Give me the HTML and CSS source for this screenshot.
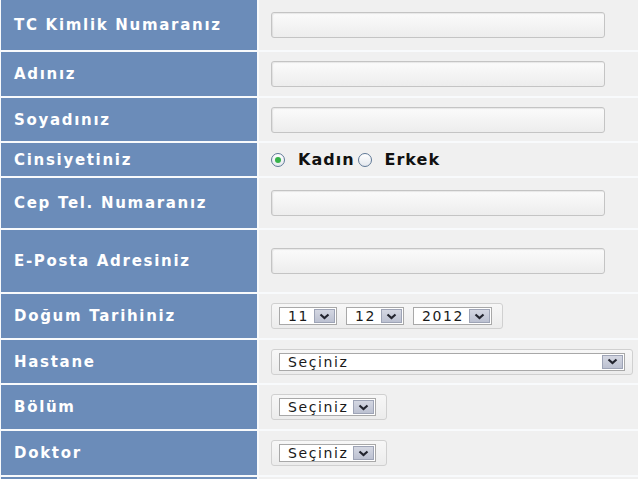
FILE: index.html
```html
<!DOCTYPE html>
<html lang="tr">
<head>
    <meta charset="UTF-8">
    <meta name="viewport" content="width=device-width, initial-scale=1.0">
    <title>Randevu Formu</title>
    <link rel="stylesheet" href="styles.css">
</head>
<body>
    <div class="form">
        <div class="row row-tc">
            <div class="label">TC Kimlik Numaranız</div>
            <div class="field"><input class="text-input" type="text"></div>
        </div>
        <div class="row row-name">
            <div class="label">Adınız</div>
            <div class="field"><input class="text-input" type="text"></div>
        </div>
        <div class="row row-surname">
            <div class="label">Soyadınız</div>
            <div class="field"><input class="text-input" type="text"></div>
        </div>
        <div class="row row-gender">
            <div class="label">Cinsiyetiniz</div>
            <div class="field">
                <label class="radio-option"><span class="radio checked"></span>Kadın</label>
                <label class="radio-option"><span class="radio"></span>Erkek</label>
            </div>
        </div>
        <div class="row row-phone">
            <div class="label">Cep Tel. Numaranız</div>
            <div class="field"><input class="text-input" type="text"></div>
        </div>
        <div class="row row-mail">
            <div class="label">E-Posta Adresiniz</div>
            <div class="field"><input class="text-input" type="text"></div>
        </div>
        <div class="row row-birth">
            <div class="label">Doğum Tarihiniz</div>
            <div class="field">
                <div class="select-box">
                    <div class="select">
                        <span class="select-value">11</span>
                        <span class="select-arrow"><svg width="11" height="7" viewBox="0 0 11 7"><path d="M1.5 1.5l4 3.5 4-3.5" fill="none" stroke="#23252f" stroke-width="2.2"/></svg></span>
                    </div>
                    <div class="select">
                        <span class="select-value">12</span>
                        <span class="select-arrow"><svg width="11" height="7" viewBox="0 0 11 7"><path d="M1.5 1.5l4 3.5 4-3.5" fill="none" stroke="#23252f" stroke-width="2.2"/></svg></span>
                    </div>
                    <div class="select">
                        <span class="select-value">2012</span>
                        <span class="select-arrow"><svg width="11" height="7" viewBox="0 0 11 7"><path d="M1.5 1.5l4 3.5 4-3.5" fill="none" stroke="#23252f" stroke-width="2.2"/></svg></span>
                    </div>
                </div>
            </div>
        </div>
        <div class="row row-hospital">
            <div class="label">Hastane</div>
            <div class="field">
                <div class="select-box wide">
                    <div class="select">
                        <span class="select-value">Seçiniz</span>
                        <span class="select-arrow"><svg width="11" height="7" viewBox="0 0 11 7"><path d="M1.5 1.5l4 3.5 4-3.5" fill="none" stroke="#23252f" stroke-width="2.2"/></svg></span>
                    </div>
                </div>
            </div>
        </div>
        <div class="row row-dept">
            <div class="label">Bölüm</div>
            <div class="field">
                <div class="select-box">
                    <div class="select">
                        <span class="select-value">Seçiniz</span>
                        <span class="select-arrow"><svg width="11" height="7" viewBox="0 0 11 7"><path d="M1.5 1.5l4 3.5 4-3.5" fill="none" stroke="#23252f" stroke-width="2.2"/></svg></span>
                    </div>
                </div>
            </div>
        </div>
        <div class="row row-doctor">
            <div class="label">Doktor</div>
            <div class="field">
                <div class="select-box">
                    <div class="select">
                        <span class="select-value">Seçiniz</span>
                        <span class="select-arrow"><svg width="11" height="7" viewBox="0 0 11 7"><path d="M1.5 1.5l4 3.5 4-3.5" fill="none" stroke="#23252f" stroke-width="2.2"/></svg></span>
                    </div>
                </div>
            </div>
        </div>
        <div class="row row-next">
            <div class="label"></div>
            <div class="field"></div>
        </div>
    </div>
</body>
</html>
```

FILE: styles.css
```css
body {
    margin: 0;
    background: #f0f0f0;
    font-family: "DejaVu Sans", Verdana, sans-serif;
    overflow: hidden;
}
.form {
    background: #f8fafc;
    padding-left: 1px;
}
.row {
    display: grid;
    grid-template-columns: 256px 1fr;
    column-gap: 2px;
    border-bottom: 2px solid #f8fafc;
    box-sizing: border-box;
}
.row-tc { height: 52px; }
.row-name { height: 46px; }
.row-surname { height: 45px; }
.row-gender { height: 35px; }
.row-phone { height: 52px; }
.row-mail { height: 64px; }
.row-birth { height: 46px; }
.row-hospital { height: 45px; }
.row-dept { height: 46px; }
.row-doctor { height: 46px; }
.row-next { height: 46px; }
.label {
    background: #6b8cb9;
    color: #ffffff;
    font-weight: bold;
    font-size: 15px;
    letter-spacing: 1.7px;
    padding-left: 13px;
    display: flex;
    align-items: center;
}
.field {
    background: #f0f0f0;
    padding-left: 12px;
    display: flex;
    align-items: center;
}
.text-input {
    width: 334px;
    height: 26px;
    box-sizing: border-box;
    border: 1px solid #c4c4c4;
    border-radius: 3px;
    background: linear-gradient(#fbfbfb, #ededed);
    box-shadow: inset 1px 1px 1px rgba(0, 0, 0, 0.08);
    margin: 0;
}
.radio-option {
    display: flex;
    align-items: center;
    font-weight: bold;
    font-size: 16px;
    letter-spacing: 1px;
    color: #111;
    margin-right: 3px;
}
.radio {
    width: 14px;
    height: 14px;
    box-sizing: border-box;
    border: 1px solid #5f7896;
    border-radius: 50%;
    background: linear-gradient(#ffffff, #e4e8ee);
    margin-right: 13px;
    display: flex;
    align-items: center;
    justify-content: center;
}
.radio.checked::after {
    content: "";
    width: 6px;
    height: 6px;
    border-radius: 50%;
    background: #36b24a;
}
.select-box {
    display: flex;
    gap: 9px;
    padding: 3px 10px 3px 7px;
    border: 1px solid #d0d0d0;
    border-radius: 3px;
    background: linear-gradient(#f7f7f7, #ececec);
}
.select-box.wide {
    width: 362px;
    box-sizing: border-box;
    padding-right: 7px;
}
.select {
    display: flex;
    align-items: stretch;
    height: 18px;
    box-sizing: border-box;
    border: 1px solid #a8a8a8;
    background: #ffffff;
    padding: 1px;
}
.select-box.wide .select {
    flex: 1;
}
.select-value {
    flex: 1;
    padding: 0 5px 0 7px;
    font-size: 14px;
    letter-spacing: 1.6px;
    line-height: 15px;
    color: #1a1a1a;
}
.select-arrow {
    width: 21px;
    box-sizing: border-box;
    border: 1px solid #9ea4b6;
    background: linear-gradient(#d4d7e2, #bcc1d1);
    display: flex;
    align-items: center;
    justify-content: center;
}
```
